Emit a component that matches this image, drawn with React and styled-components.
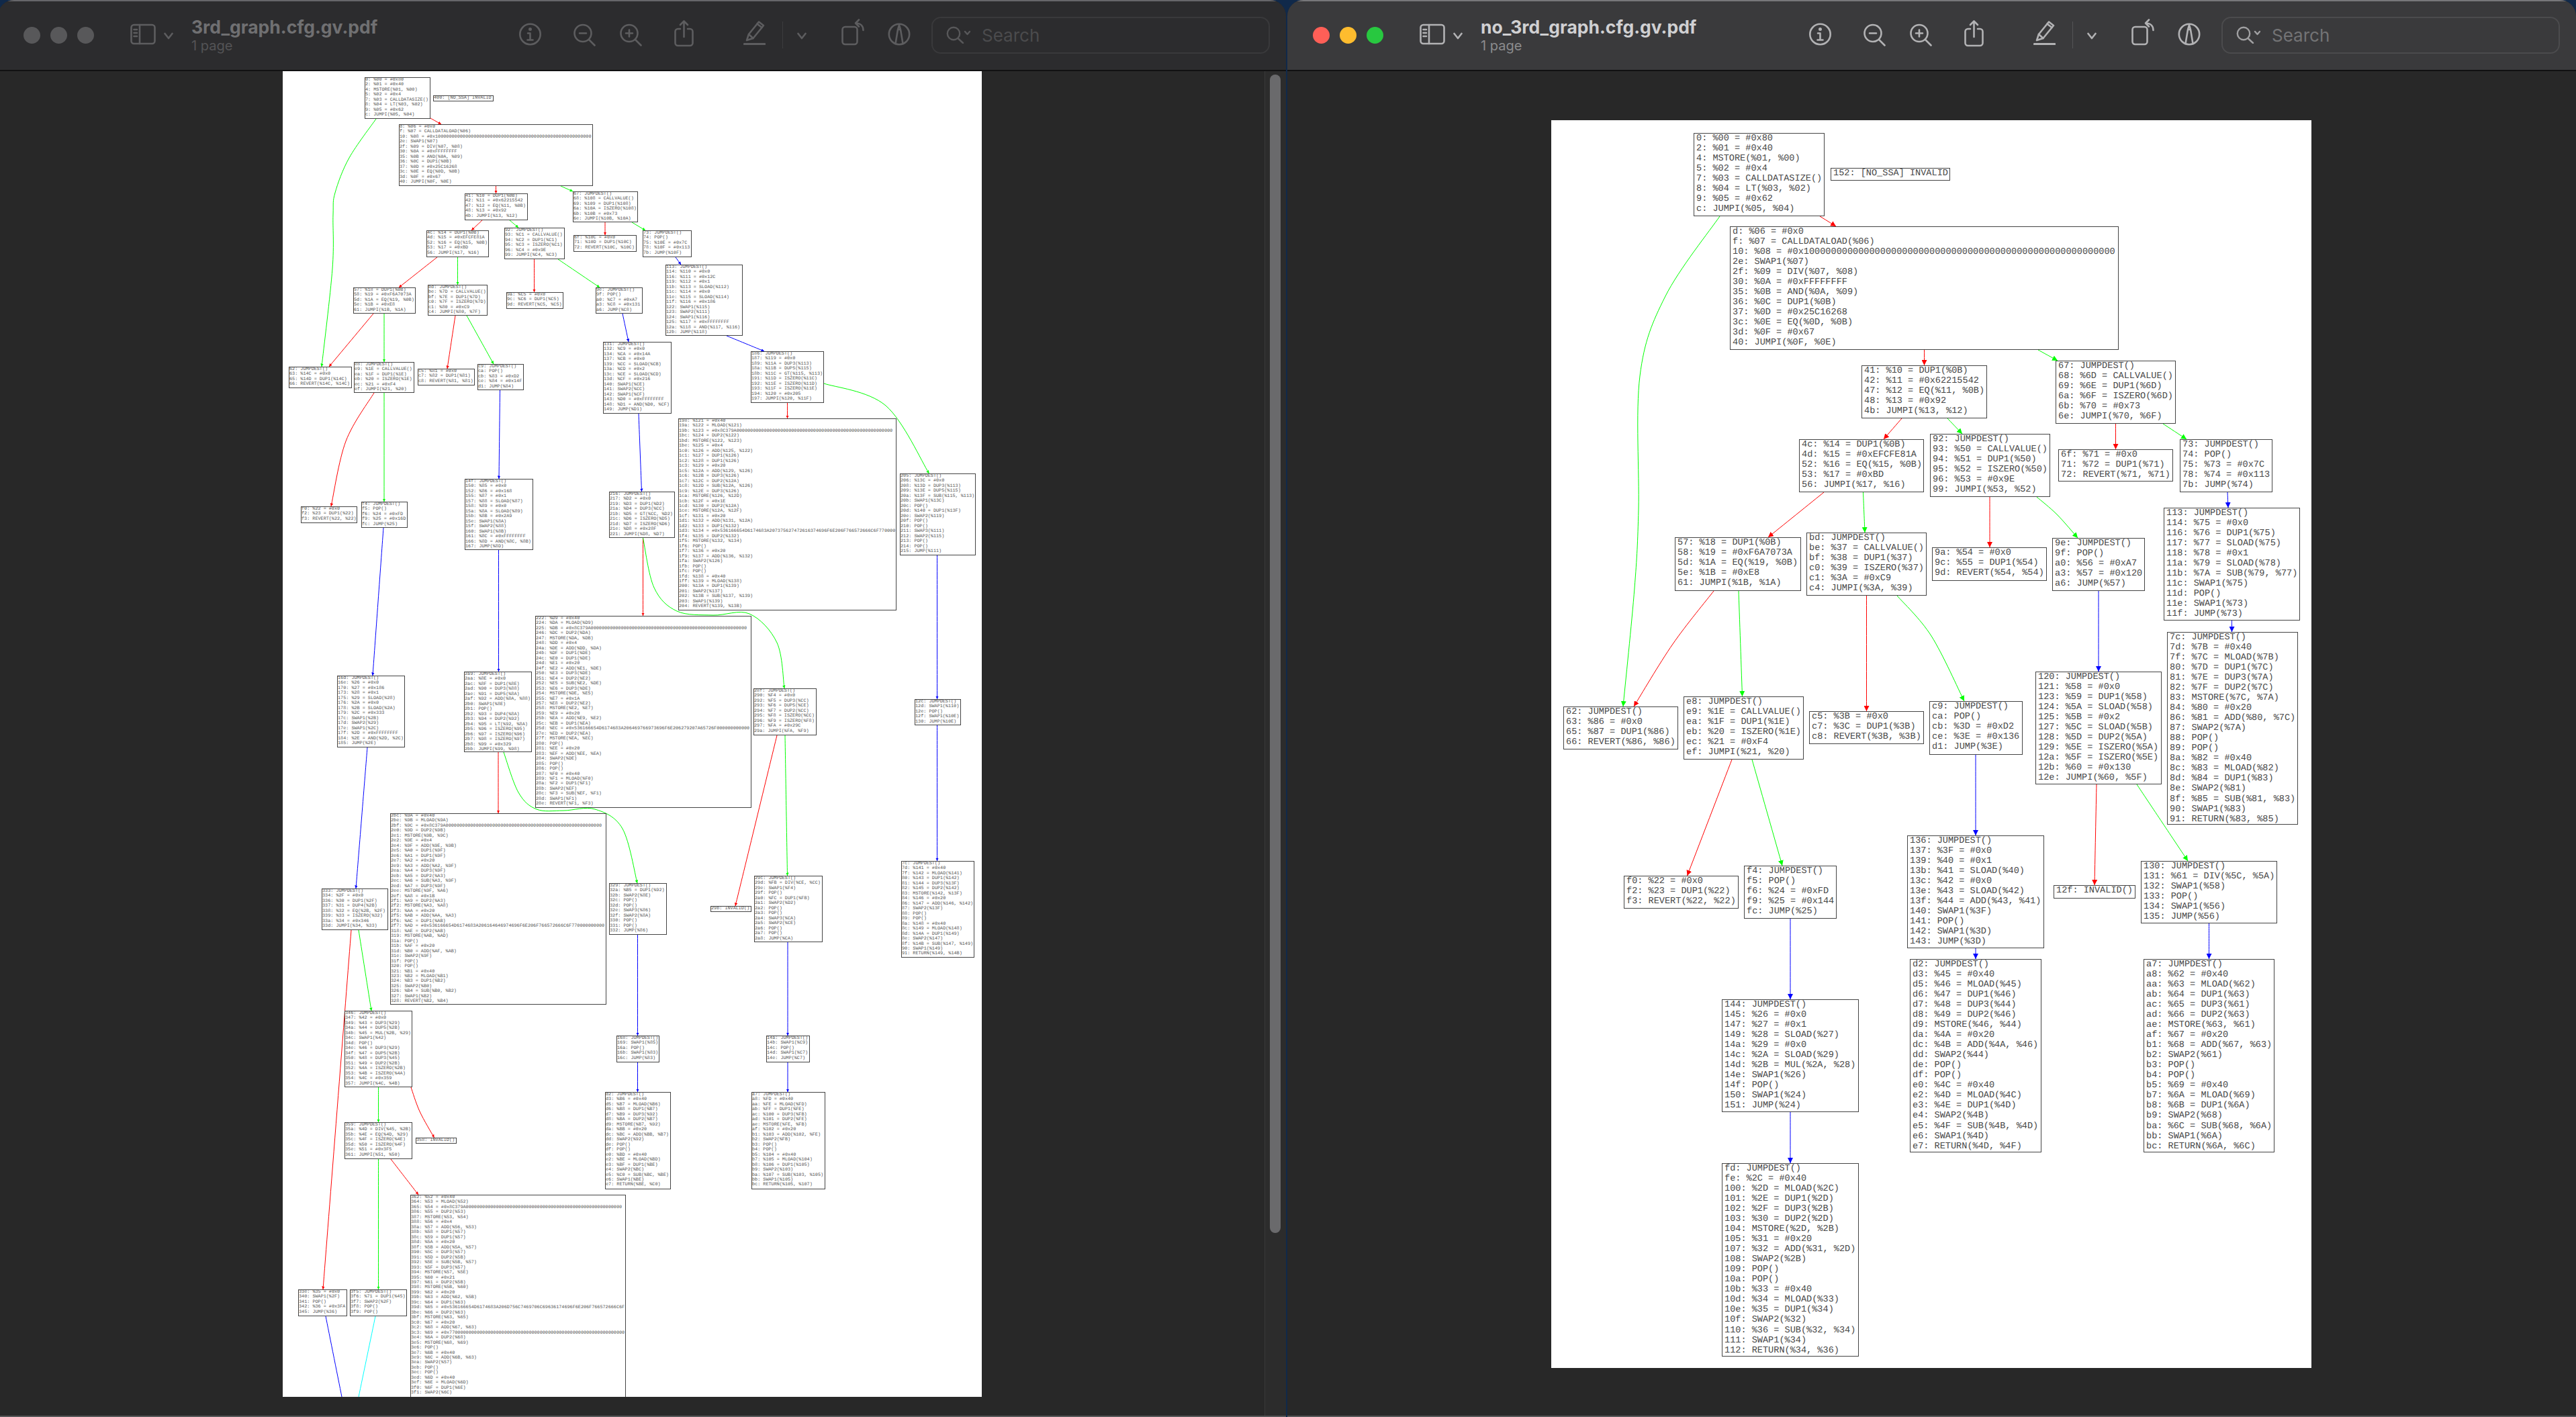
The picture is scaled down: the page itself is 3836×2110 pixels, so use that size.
import React from "react";
import styled, { createGlobalStyle } from "styled-components";

const zeros = (n) => "0".repeat(n);
const REASON = "#0x8C379A" + zeros(57);

const GlobalStyle = createGlobalStyle`
  html, body {
    margin: 0;
    padding: 0;
    background: #10294a;
  }
`;

// page rectangles and text metrics of the two pdf pages, in screen pixels
const LEFT_PAGE = { x: 421, y: 106, w: 1041, h: 1974, font: 6.8, line: 7.47, pad: 1, head: 4.5, ink: "#555" };
const RIGHT_PAGE = { x: 2310, y: 179, w: 1132, h: 1858, font: 13.57, line: 15.03, pad: 4, head: 8, ink: "#484848" };

const COLORS = { r: "#ff0000", g: "#00ff00", b: "#0000ff", c: "#00ffff" };

const RIGHT_NODES = [
  [2522, 198, 2717, 322, "0: %00 = #0x80\n2: %01 = #0x40\n4: MSTORE(%01, %00)\n5: %02 = #0x4\n7: %03 = CALLDATASIZE()\n8: %04 = LT(%03, %02)\n9: %05 = #0x62\nc: JUMPI(%05, %04)"],
  [2726, 250, 2904, 269, "152: [NO_SSA] INVALID"],
  [2576, 337, 3155, 521, "d: %06 = #0x0\nf: %07 = CALLDATALOAD(%06)\n10: %08 = #0x1" + zeros(56) + "\n2e: SWAP1(%07)\n2f: %09 = DIV(%07, %08)\n30: %0A = #0xFFFFFFFF\n35: %0B = AND(%0A, %09)\n36: %0C = DUP1(%0B)\n37: %0D = #0x25C16268\n3c: %0E = EQ(%0D, %0B)\n3d: %0F = #0x67\n40: JUMPI(%0F, %0E)"],
  [2772, 544, 2959, 623, "41: %10 = DUP1(%0B)\n42: %11 = #0x62215542\n47: %12 = EQ(%11, %0B)\n48: %13 = #0x92\n4b: JUMPI(%13, %12)"],
  [3061, 537, 3240, 631, "67: JUMPDEST()\n68: %6D = CALLVALUE()\n69: %6E = DUP1(%6D)\n6a: %6F = ISZERO(%6D)\n6b: %70 = #0x73\n6e: JUMPI(%70, %6F)"],
  [2679, 654, 2865, 733, "4c: %14 = DUP1(%0B)\n4d: %15 = #0xEFCFE81A\n52: %16 = EQ(%15, %0B)\n53: %17 = #0xBD\n56: JUMPI(%17, %16)"],
  [2874, 646, 3053, 740, "92: JUMPDEST()\n93: %50 = CALLVALUE()\n94: %51 = DUP1(%50)\n95: %52 = ISZERO(%50)\n96: %53 = #0x9E\n99: JUMPI(%53, %52)"],
  [3065, 669, 3236, 717, "6f: %71 = #0x0\n71: %72 = DUP1(%71)\n72: REVERT(%71, %71)"],
  [3246, 654, 3384, 733, "73: JUMPDEST()\n74: POP()\n75: %73 = #0x7C\n78: %74 = #0x113\n7b: JUMP(%74)"],
  [3222, 756, 3425, 924, "113: JUMPDEST()\n114: %75 = #0x0\n116: %76 = DUP1(%75)\n117: %77 = SLOAD(%75)\n118: %78 = #0x1\n11a: %79 = SLOAD(%78)\n11b: %7A = SUB(%79, %77)\n11c: SWAP1(%75)\n11d: POP()\n11e: SWAP1(%73)\n11f: JUMP(%73)"],
  [2494, 800, 2682, 880, "57: %18 = DUP1(%0B)\n58: %19 = #0xF6A7073A\n5d: %1A = EQ(%19, %0B)\n5e: %1B = #0xE8\n61: JUMPI(%1B, %1A)"],
  [2690, 793, 2869, 887, "bd: JUMPDEST()\nbe: %37 = CALLVALUE()\nbf: %38 = DUP1(%37)\nc0: %39 = ISZERO(%37)\nc1: %3A = #0xC9\nc4: JUMPI(%3A, %39)"],
  [2877, 815, 3048, 865, "9a: %54 = #0x0\n9c: %55 = DUP1(%54)\n9d: REVERT(%54, %54)"],
  [3056, 801, 3194, 880, "9e: JUMPDEST()\n9f: POP()\na0: %56 = #0xA7\na3: %57 = #0x120\na6: JUMP(%57)"],
  [2328, 1052, 2499, 1116, "62: JUMPDEST()\n63: %86 = #0x0\n65: %87 = DUP1(%86)\n66: REVERT(%86, %86)"],
  [2507, 1037, 2686, 1131, "e8: JUMPDEST()\ne9: %1E = CALLVALUE()\nea: %1F = DUP1(%1E)\neb: %20 = ISZERO(%1E)\nec: %21 = #0xF4\nef: JUMPI(%21, %20)"],
  [2694, 1059, 2865, 1108, "c5: %3B = #0x0\nc7: %3C = DUP1(%3B)\nc8: REVERT(%3B, %3B)"],
  [2873, 1044, 3012, 1124, "c9: JUMPDEST()\nca: POP()\ncb: %3D = #0xD2\nce: %3E = #0x136\nd1: JUMP(%3E)"],
  [3031, 1000, 3219, 1168, "120: JUMPDEST()\n121: %58 = #0x0\n123: %59 = DUP1(%58)\n124: %5A = SLOAD(%58)\n125: %5B = #0x2\n127: %5C = SLOAD(%5B)\n128: %5D = DUP2(%5A)\n129: %5E = ISZERO(%5A)\n12a: %5F = ISZERO(%5E)\n12b: %60 = #0x130\n12e: JUMPI(%60, %5F)"],
  [3227, 941, 3422, 1228, "7c: JUMPDEST()\n7d: %7B = #0x40\n7f: %7C = MLOAD(%7B)\n80: %7D = DUP1(%7C)\n81: %7E = DUP3(%7A)\n82: %7F = DUP2(%7C)\n83: MSTORE(%7C, %7A)\n84: %80 = #0x20\n86: %81 = ADD(%80, %7C)\n87: SWAP2(%7A)\n88: POP()\n89: POP()\n8a: %82 = #0x40\n8c: %83 = MLOAD(%82)\n8d: %84 = DUP1(%83)\n8e: SWAP2(%81)\n8f: %85 = SUB(%81, %83)\n90: SWAP1(%83)\n91: RETURN(%83, %85)"],
  [3188, 1282, 3391, 1375, "130: JUMPDEST()\n131: %61 = DIV(%5C, %5A)\n132: SWAP1(%58)\n133: POP()\n134: SWAP1(%56)\n135: JUMP(%56)"],
  [3058, 1318, 3180, 1338, "12f: INVALID()"],
  [3192, 1428, 3387, 1716, "a7: JUMPDEST()\na8: %62 = #0x40\naa: %63 = MLOAD(%62)\nab: %64 = DUP1(%63)\nac: %65 = DUP3(%61)\nad: %66 = DUP2(%63)\nae: MSTORE(%63, %61)\naf: %67 = #0x20\nb1: %68 = ADD(%67, %63)\nb2: SWAP2(%61)\nb3: POP()\nb4: POP()\nb5: %69 = #0x40\nb7: %6A = MLOAD(%69)\nb8: %6B = DUP1(%6A)\nb9: SWAP2(%68)\nba: %6C = SUB(%68, %6A)\nbb: SWAP1(%6A)\nbc: RETURN(%6A, %6C)"],
  [2840, 1244, 3044, 1412, "136: JUMPDEST()\n137: %3F = #0x0\n139: %40 = #0x1\n13b: %41 = SLOAD(%40)\n13c: %42 = #0x0\n13e: %43 = SLOAD(%42)\n13f: %44 = ADD(%43, %41)\n140: SWAP1(%3F)\n141: POP()\n142: SWAP1(%3D)\n143: JUMP(%3D)"],
  [2844, 1428, 3040, 1716, "d2: JUMPDEST()\nd3: %45 = #0x40\nd5: %46 = MLOAD(%45)\nd6: %47 = DUP1(%46)\nd7: %48 = DUP3(%44)\nd8: %49 = DUP2(%46)\nd9: MSTORE(%46, %44)\nda: %4A = #0x20\ndc: %4B = ADD(%4A, %46)\ndd: SWAP2(%44)\nde: POP()\ndf: POP()\ne0: %4C = #0x40\ne2: %4D = MLOAD(%4C)\ne3: %4E = DUP1(%4D)\ne4: SWAP2(%4B)\ne5: %4F = SUB(%4B, %4D)\ne6: SWAP1(%4D)\ne7: RETURN(%4D, %4F)"],
  [2597, 1289, 2735, 1368, "f4: JUMPDEST()\nf5: POP()\nf6: %24 = #0xFD\nf9: %25 = #0x144\nfc: JUMP(%25)"],
  [2418, 1304, 2589, 1353, "f0: %22 = #0x0\nf2: %23 = DUP1(%22)\nf3: REVERT(%22, %22)"],
  [2564, 1488, 2768, 1656, "144: JUMPDEST()\n145: %26 = #0x0\n147: %27 = #0x1\n149: %28 = SLOAD(%27)\n14a: %29 = #0x0\n14c: %2A = SLOAD(%29)\n14d: %2B = MUL(%2A, %28)\n14e: SWAP1(%26)\n14f: POP()\n150: SWAP1(%24)\n151: JUMP(%24)"],
  [2564, 1732, 2768, 2020, "fd: JUMPDEST()\nfe: %2C = #0x40\n100: %2D = MLOAD(%2C)\n101: %2E = DUP1(%2D)\n102: %2F = DUP3(%2B)\n103: %30 = DUP2(%2D)\n104: MSTORE(%2D, %2B)\n105: %31 = #0x20\n107: %32 = ADD(%31, %2D)\n108: SWAP2(%2B)\n109: POP()\n10a: POP()\n10b: %33 = #0x40\n10d: %34 = MLOAD(%33)\n10e: %35 = DUP1(%34)\n10f: SWAP2(%32)\n110: %36 = SUB(%32, %34)\n111: SWAP1(%34)\n112: RETURN(%34, %36)"],
];

const RIGHT_EDGES = [
  ["g", [[2561, 322], [2480, 441], [2442, 560], [2440, 758], [2434, 876], [2417, 1052]]],
  ["r", [[2710, 322], [2734, 337]]],
  ["r", [[2865.5, 521], [2865.5, 544]]],
  ["g", [[3035, 521], [3064, 537]]],
  ["r", [[2832, 623], [2805, 654]]],
  ["g", [[2900, 623], [2922, 646]]],
  ["r", [[3150.5, 631], [3150.5, 669]]],
  ["g", [[3221, 631], [3256, 654]]],
  ["r", [[2716, 733], [2633, 800]]],
  ["g", [[2774.5, 733], [2777, 793]]],
  ["r", [[2963, 740], [2963, 815]]],
  ["g", [[3033, 740], [3063, 766], [3094, 801]]],
  ["r", [[2552, 880], [2491, 959], [2433, 1052]]],
  ["g", [[2589, 880], [2594.5, 1037]]],
  ["r", [[2779.5, 887], [2779.5, 1059]]],
  ["g", [[2825, 887], [2876, 947], [2925, 1044]]],
  ["b", [[2942, 1124], [2942, 1244]]],
  ["r", [[2579, 1131], [2512.5, 1304]]],
  ["g", [[2609, 1131], [2654, 1289]]],
  ["b", [[2666, 1368], [2666, 1488]]],
  ["b", [[2942, 1412], [2942, 1428]]],
  ["b", [[2666, 1656], [2666, 1732]]],
  ["b", [[3317, 733], [3318, 756]]],
  ["b", [[3323.5, 924], [3323.5, 941]]],
  ["b", [[3125, 880], [3125, 1000]]],
  ["r", [[3122, 1168], [3119, 1318]]],
  ["g", [[3182, 1168], [3220, 1225], [3258, 1282]]],
  ["b", [[3289.5, 1375], [3289.5, 1428]]],
];

const LEFT_NODES = [
  [543, 115, 641, 177, "0: %00 = #0x80\n2: %01 = #0x40\n4: MSTORE(%01, %00)\n5: %02 = #0x4\n7: %03 = CALLDATASIZE()\n8: %04 = LT(%03, %02)\n9: %05 = #0x62\nc: JUMPI(%05, %04)"],
  [645, 142, 735, 151, "400: [NO_SSA] INVALID"],
  [594, 185, 883, 277, "d: %06 = #0x0\nf: %07 = CALLDATALOAD(%06)\n10: %08 = #0x1" + zeros(56) + "\n2e: SWAP1(%07)\n2f: %09 = DIV(%07, %08)\n30: %0A = #0xFFFFFFFF\n35: %0B = AND(%0A, %09)\n36: %0C = DUP1(%0B)\n37: %0D = #0x25C16268\n3c: %0E = EQ(%0D, %0B)\n3d: %0F = #0x67\n40: JUMPI(%0F, %0E)"],
  [692, 288, 786, 328, "41: %10 = DUP1(%0B)\n42: %11 = #0x62215542\n47: %12 = EQ(%11, %0B)\n48: %13 = #0x92\n4b: JUMPI(%13, %12)"],
  [853, 285, 950, 331, "67: JUMPDEST()\n68: %108 = CALLVALUE()\n69: %109 = DUP1(%108)\n6a: %10A = ISZERO(%108)\n6b: %10B = #0x73\n6e: JUMPI(%10B, %10A)"],
  [635, 343, 728, 383, "4c: %14 = DUP1(%0B)\n4d: %15 = #0xEFCFE81A\n52: %16 = EQ(%15, %0B)\n53: %17 = #0xBD\n56: JUMPI(%17, %16)"],
  [751, 339, 841, 386, "92: JUMPDEST()\n93: %C1 = CALLVALUE()\n94: %C2 = DUP1(%C1)\n95: %C3 = ISZERO(%C1)\n96: %C4 = #0x9E\n99: JUMPI(%C4, %C3)"],
  [854, 350, 948, 375, "6f: %10C = #0x0\n71: %10D = DUP1(%10C)\n72: REVERT(%10C, %10C)"],
  [957, 343, 1030, 383, "73: JUMPDEST()\n74: POP()\n75: %10E = #0x7C\n78: %10F = #0x113\n7b: JUMP(%10F)"],
  [991, 394, 1106, 500, "113: JUMPDEST()\n114: %110 = #0x0\n116: %111 = #0x12C\n119: %112 = #0x1\n11b: %113 = SLOAD(%112)\n11c: %114 = #0x0\n11e: %115 = SLOAD(%114)\n11f: %116 = #0x186\n122: SWAP1(%115)\n123: SWAP2(%111)\n124: SWAP1(%116)\n125: %117 = #0xFFFFFFFF\n12a: %118 = AND(%117, %116)\n12b: JUMP(%118)"],
  [526, 428, 619, 467, "57: %18 = DUP1(%0B)\n58: %19 = #0xF6A7073A\n5d: %1A = EQ(%19, %0B)\n5e: %1B = #0xE8\n61: JUMPI(%1B, %1A)"],
  [637, 424, 726, 470, "bd: JUMPDEST()\nbe: %7D = CALLVALUE()\nbf: %7E = DUP1(%7D)\nc0: %7F = ISZERO(%7D)\nc1: %80 = #0xC9\nc4: JUMPI(%80, %7F)"],
  [754, 435, 839, 460, "9a: %C5 = #0x0\n9c: %C6 = DUP1(%C5)\n9d: REVERT(%C5, %C5)"],
  [887, 428, 957, 467, "9e: JUMPDEST()\n9f: POP()\na0: %C7 = #0xA7\na3: %C8 = #0x131\na6: JUMP(%C8)"],
  [898, 509, 1000, 616, "131: JUMPDEST()\n132: %C9 = #0x0\n134: %CA = #0x14A\n137: %CB = #0x0\n139: %CC = SLOAD(%CB)\n13a: %CD = #0x2\n13c: %CE = SLOAD(%CD)\n13d: %CF = #0x216\n140: SWAP1(%CE)\n141: SWAP2(%CC)\n142: SWAP1(%CF)\n143: %D0 = #0xFFFFFFFF\n148: %D1 = AND(%D0, %CF)\n149: JUMP(%D1)"],
  [1118, 523, 1227, 600, "186: JUMPDEST()\n187: %119 = #0x0\n189: %11A = DUP3(%113)\n18a: %11B = DUP5(%115)\n18b: %11C = GT(%115, %113)\n191: %11D = ISZERO(%11C)\n192: %11E = ISZERO(%11D)\n193: %11F = ISZERO(%11E)\n194: %120 = #0x205\n197: JUMPI(%120, %11F)"],
  [430, 546, 524, 578, "62: JUMPDEST()\n63: %14C = #0x0\n65: %14D = DUP1(%14C)\n66: REVERT(%14C, %14C)"],
  [527, 539, 617, 585, "e8: JUMPDEST()\ne9: %1E = CALLVALUE()\nea: %1F = DUP1(%1E)\neb: %20 = ISZERO(%1E)\nec: %21 = #0xF4\nef: JUMPI(%21, %20)"],
  [622, 549, 707, 574, "c5: %81 = #0x0\nc7: %82 = DUP1(%81)\nc8: REVERT(%81, %81)"],
  [711, 542, 780, 581, "c9: JUMPDEST()\nca: POP()\ncb: %83 = #0xD2\nce: %84 = #0x14F\nd1: JUMP(%84)"],
  [1010, 623, 1335, 909, "198: %121 = #0x40\n19a: %122 = MLOAD(%121)\n19b: %123 = " + REASON + "\n1bc: %124 = DUP2(%122)\n1bd: MSTORE(%122, %123)\n1be: %125 = #0x4\n1c0: %126 = ADD(%125, %122)\n1c1: %127 = DUP1(%126)\n1c2: %128 = DUP1(%126)\n1c3: %129 = #0x20\n1c5: %12A = ADD(%129, %126)\n1c6: %12B = DUP3(%126)\n1c7: %12C = DUP2(%12A)\n1c8: %12D = SUB(%12A, %126)\n1c9: %12E = DUP3(%126)\n1ca: MSTORE(%126, %12D)\n1cb: %12F = #0x1E\n1cd: %130 = DUP2(%12A)\n1ce: MSTORE(%12A, %12F)\n1cf: %131 = #0x20\n1d1: %132 = ADD(%131, %12A)\n1d2: %133 = DUP1(%132)\n1d3: %134 = #0x536166654D6174683A207375627472616374696F6E206F766572666C6F770000\n1f4: %135 = DUP2(%132)\n1f5: MSTORE(%132, %134)\n1f6: POP()\n1f7: %136 = #0x20\n1f9: %137 = ADD(%136, %132)\n1fa: SWAP2(%126)\n1fb: POP()\n1fc: POP()\n1fd: %138 = #0x40\n1ff: %139 = MLOAD(%138)\n200: %13A = DUP1(%139)\n201: SWAP2(%137)\n202: %13B = SUB(%137, %139)\n203: SWAP1(%139)\n204: REVERT(%139, %13B)"],
  [797, 917, 1119, 1203, "222: %D9 = #0x40\n224: %DA = MLOAD(%D9)\n225: %DB = " + REASON + "\n246: %DC = DUP2(%DA)\n247: MSTORE(%DA, %DB)\n248: %DD = #0x4\n24a: %DE = ADD(%DD, %DA)\n24b: %DF = DUP1(%DE)\n24c: %E0 = DUP1(%DE)\n24d: %E1 = #0x20\n24f: %E2 = ADD(%E1, %DE)\n250: %E3 = DUP3(%DE)\n251: %E4 = DUP2(%E2)\n252: %E5 = SUB(%E2, %DE)\n253: %E6 = DUP3(%DE)\n254: MSTORE(%DE, %E5)\n255: %E7 = #0x1A\n257: %E8 = DUP2(%E2)\n258: MSTORE(%E2, %E7)\n259: %E9 = #0x20\n25b: %EA = ADD(%E9, %E2)\n25c: %EB = DUP1(%EA)\n25d: %EC = #0x536166654D6174683A206469766973696F6E206279207A65726F000000000000\n27e: %ED = DUP2(%EA)\n27f: MSTORE(%EA, %EC)\n280: POP()\n281: %EE = #0x20\n283: %EF = ADD(%EE, %EA)\n284: SWAP2(%DE)\n285: POP()\n286: POP()\n287: %F0 = #0x40\n289: %F1 = MLOAD(%F0)\n28a: %F2 = DUP1(%F1)\n28b: SWAP2(%EF)\n28c: %F3 = SUB(%EF, %F1)\n28d: SWAP1(%F1)\n28e: REVERT(%F1, %F3)"],
  [907, 732, 1005, 801, "216: JUMPDEST()\n217: %D2 = #0x0\n219: %D3 = DUP1(%D2)\n21a: %D4 = DUP3(%CC)\n21b: %D5 = GT(%CC, %D2)\n21c: %D6 = ISZERO(%D5)\n21d: %D7 = ISZERO(%D6)\n21e: %D8 = #0x28F\n221: JUMPI(%D8, %D7)"],
  [692, 713, 794, 819, "14f: JUMPDEST()\n150: %85 = #0x0\n152: %86 = #0x168\n155: %87 = #0x1\n157: %88 = SLOAD(%87)\n158: %89 = #0x0\n15a: %8A = SLOAD(%89)\n15b: %8B = #0x2A9\n15e: SWAP1(%8A)\n15f: SWAP2(%88)\n160: SWAP1(%8B)\n161: %8C = #0xFFFFFFFF\n166: %8D = AND(%8C, %8B)\n167: JUMP(%8D)"],
  [448, 754, 532, 779, "f0: %22 = #0x0\nf2: %23 = DUP1(%22)\nf3: REVERT(%22, %22)"],
  [538, 747, 607, 786, "f4: JUMPDEST()\nf5: POP()\nf6: %24 = #0xFD\nf9: %25 = #0x16D\nfc: JUMP(%25)"],
  [1340, 705, 1453, 827, "205: JUMPDEST()\n206: %13C = #0x0\n208: %13D = DUP3(%113)\n209: %13E = DUP5(%115)\n20a: %13F = SUB(%115, %113)\n20b: SWAP1(%13C)\n20c: POP()\n20d: %140 = DUP1(%13F)\n20e: SWAP2(%119)\n20f: POP()\n210: POP()\n211: SWAP3(%111)\n212: SWAP2(%115)\n213: POP()\n214: POP()\n215: JUMP(%111)"],
  [502, 1006, 603, 1113, "16d: JUMPDEST()\n16e: %26 = #0x0\n170: %27 = #0x186\n173: %28 = #0x1\n175: %29 = SLOAD(%28)\n176: %2A = #0x0\n178: %2B = SLOAD(%2A)\n179: %2C = #0x333\n17c: SWAP1(%2B)\n17d: SWAP2(%29)\n17e: SWAP1(%2C)\n17f: %2D = #0xFFFFFFFF\n184: %2E = AND(%2D, %2C)\n185: JUMP(%2E)"],
  [691, 1000, 792, 1120, "2a9: JUMPDEST()\n2aa: %8E = #0x0\n2ac: %8F = DUP1(%8E)\n2ad: %90 = DUP3(%88)\n2ae: %91 = DUP5(%8A)\n2af: %92 = ADD(%8A, %88)\n2b0: SWAP1(%8E)\n2b1: POP()\n2b2: %93 = DUP4(%8A)\n2b3: %94 = DUP2(%92)\n2b4: %95 = LT(%92, %8A)\n2b5: %96 = ISZERO(%95)\n2b6: %97 = ISZERO(%96)\n2b7: %98 = ISZERO(%97)\n2b8: %99 = #0x329\n2bb: JUMPI(%99, %98)"],
  [1122, 1025, 1216, 1095, "28f: JUMPDEST()\n290: %F4 = #0x0\n292: %F5 = DUP3(%CC)\n293: %F6 = DUP5(%CE)\n294: %F7 = DUP2(%CC)\n295: %F8 = ISZERO(%CC)\n296: %F9 = ISZERO(%F8)\n297: %FA = #0x29C\n29a: JUMPI(%FA, %F9)"],
  [1362, 1041, 1431, 1080, "12c: JUMPDEST()\n12d: SWAP1(%110)\n12e: POP()\n12f: SWAP1(%10E)\n130: JUMP(%10E)"],
  [581, 1211, 903, 1496, "2bc: %9A = #0x40\n2be: %9B = MLOAD(%9A)\n2bf: %9C = " + REASON + "\n2e0: %9D = DUP2(%9B)\n2e1: MSTORE(%9B, %9C)\n2e2: %9E = #0x4\n2e4: %9F = ADD(%9E, %9B)\n2e5: %A0 = DUP1(%9F)\n2e6: %A1 = DUP1(%9F)\n2e7: %A2 = #0x20\n2e9: %A3 = ADD(%A2, %9F)\n2ea: %A4 = DUP3(%9F)\n2eb: %A5 = DUP2(%A3)\n2ec: %A6 = SUB(%A3, %9F)\n2ed: %A7 = DUP3(%9F)\n2ee: MSTORE(%9F, %A6)\n2ef: %A8 = #0x1B\n2f1: %A9 = DUP2(%A3)\n2f2: MSTORE(%A3, %A8)\n2f3: %AA = #0x20\n2f5: %AB = ADD(%AA, %A3)\n2f6: %AC = DUP1(%AB)\n2f7: %AD = #0x536166654D6174683A206164646974696F6E206F766572666C6F770000000000\n318: %AE = DUP2(%AB)\n319: MSTORE(%AB, %AD)\n31a: POP()\n31b: %AF = #0x20\n31d: %B0 = ADD(%AF, %AB)\n31e: SWAP2(%9F)\n31f: POP()\n320: POP()\n321: %B1 = #0x40\n323: %B2 = MLOAD(%B1)\n324: %B3 = DUP1(%B2)\n325: SWAP2(%B0)\n326: %B4 = SUB(%B0, %B2)\n327: SWAP1(%B2)\n328: REVERT(%B2, %B4)"],
  [1342, 1282, 1451, 1426, "7c: JUMPDEST()\n7d: %141 = #0x40\n7f: %142 = MLOAD(%141)\n80: %143 = DUP1(%142)\n81: %144 = DUP3(%13F)\n82: %145 = DUP2(%142)\n83: MSTORE(%142, %13F)\n84: %146 = #0x20\n86: %147 = ADD(%146, %142)\n87: SWAP2(%13F)\n88: POP()\n89: POP()\n8a: %148 = #0x40\n8c: %149 = MLOAD(%148)\n8d: %14A = DUP1(%149)\n8e: SWAP2(%147)\n8f: %14B = SUB(%147, %149)\n90: SWAP1(%149)\n91: RETURN(%149, %14B)"],
  [1123, 1304, 1225, 1403, "29c: JUMPDEST()\n29d: %FB = DIV(%CE, %CC)\n29e: SWAP1(%F4)\n29f: POP()\n2a0: %FC = DUP1(%FB)\n2a1: SWAP2(%D2)\n2a2: POP()\n2a3: POP()\n2a4: SWAP3(%CA)\n2a5: SWAP2(%CE)\n2a6: POP()\n2a7: POP()\n2a8: JUMP(%CA)"],
  [479, 1323, 578, 1385, "333: JUMPDEST()\n334: %2F = #0x0\n336: %30 = DUP1(%2F)\n337: %31 = DUP4(%2B)\n338: %32 = EQ(%2B, %2F)\n339: %33 = ISZERO(%32)\n33a: %34 = #0x346\n33d: JUMPI(%34, %33)"],
  [907, 1315, 993, 1392, "329: JUMPDEST()\n32a: %B5 = DUP1(%92)\n32b: SWAP2(%8E)\n32c: POP()\n32d: POP()\n32e: SWAP3(%86)\n32f: SWAP2(%8A)\n330: POP()\n331: POP()\n332: JUMP(%86)"],
  [1058, 1349, 1119, 1358, "29b: INVALID()"],
  [513, 1505, 614, 1619, "346: JUMPDEST()\n347: %42 = #0x0\n349: %43 = DUP3(%29)\n34a: %44 = DUP5(%2B)\n34b: %45 = MUL(%2B, %29)\n34c: SWAP1(%42)\n34d: POP()\n34e: %46 = DUP3(%29)\n34f: %47 = DUP5(%2B)\n350: %48 = DUP3(%45)\n351: %49 = DUP2(%2B)\n352: %4A = ISZERO(%2B)\n353: %4B = ISZERO(%4A)\n354: %4C = #0x359\n357: JUMPI(%4C, %4B)"],
  [918, 1542, 982, 1582, "168: JUMPDEST()\n169: SWAP1(%85)\n16a: POP()\n16b: SWAP1(%83)\n16c: JUMP(%83)"],
  [1141, 1542, 1206, 1582, "14a: JUMPDEST()\n14b: SWAP1(%C9)\n14c: POP()\n14d: SWAP1(%C7)\n14e: JUMP(%C7)"],
  [901, 1626, 999, 1771, "d2: JUMPDEST()\nd3: %B6 = #0x40\nd5: %B7 = MLOAD(%B6)\nd6: %B8 = DUP1(%B7)\nd7: %B9 = DUP3(%92)\nd8: %BA = DUP2(%B7)\nd9: MSTORE(%B7, %92)\nda: %BB = #0x20\ndc: %BC = ADD(%BB, %B7)\ndd: SWAP2(%92)\nde: POP()\ndf: POP()\ne0: %BD = #0x40\ne2: %BE = MLOAD(%BD)\ne3: %BF = DUP1(%BE)\ne4: SWAP2(%BC)\ne5: %C0 = SUB(%BC, %BE)\ne6: SWAP1(%BE)\ne7: RETURN(%BE, %C0)"],
  [1119, 1626, 1229, 1771, "a7: JUMPDEST()\na8: %FD = #0x40\naa: %FE = MLOAD(%FD)\nab: %FF = DUP1(%FE)\nac: %100 = DUP3(%FB)\nad: %101 = DUP2(%FE)\nae: MSTORE(%FE, %FB)\naf: %102 = #0x20\nb1: %103 = ADD(%102, %FE)\nb2: SWAP2(%FB)\nb3: POP()\nb4: POP()\nb5: %104 = #0x40\nb7: %105 = MLOAD(%104)\nb8: %106 = DUP1(%105)\nb9: SWAP2(%103)\nba: %107 = SUB(%103, %105)\nbb: SWAP1(%105)\nbc: RETURN(%105, %107)"],
  [513, 1671, 614, 1726, "359: JUMPDEST()\n35a: %4D = DIV(%45, %2B)\n35b: %4E = EQ(%4D, %29)\n35c: %4F = ISZERO(%4E)\n35d: %50 = ISZERO(%4F)\n35e: %51 = #0x3F5\n361: JUMPI(%51, %50)"],
  [619, 1694, 680, 1703, "358: INVALID()"],
  [611, 1779, 932, 2110, "362: %52 = #0x40\n364: %53 = MLOAD(%52)\n365: %54 = " + REASON + "\n386: %55 = DUP2(%53)\n387: MSTORE(%53, %54)\n388: %56 = #0x4\n38a: %57 = ADD(%56, %53)\n38b: %58 = DUP1(%57)\n38c: %59 = DUP1(%57)\n38d: %5A = #0x20\n38f: %5B = ADD(%5A, %57)\n390: %5C = DUP3(%57)\n391: %5D = DUP2(%5B)\n392: %5E = SUB(%5B, %57)\n393: %5F = DUP3(%57)\n394: MSTORE(%57, %5E)\n395: %60 = #0x21\n397: %61 = DUP2(%5B)\n398: MSTORE(%5B, %60)\n399: %62 = #0x20\n39b: %63 = ADD(%62, %5B)\n39c: %64 = DUP1(%63)\n39d: %65 = #0x536166654D6174683A206D756C7469706C69636174696F6E206F766572666C6F\n3be: %66 = DUP2(%63)\n3bf: MSTORE(%63, %65)\n3c0: %67 = #0x20\n3c2: %68 = ADD(%67, %63)\n3c3: %69 = #0x77" + zeros(62) + "\n3e4: %6A = DUP2(%68)\n3e5: MSTORE(%68, %69)\n3e6: POP()\n3e7: %6B = #0x40\n3e9: %6C = ADD(%6B, %63)\n3ea: SWAP2(%57)\n3eb: POP()\n3ec: POP()\n3ed: %6D = #0x40\n3ef: %6E = MLOAD(%6D)\n3f0: %6F = DUP1(%6E)\n3f1: SWAP2(%6C)"],
  [444, 1920, 517, 1960, "33e: %35 = #0x0\n340: SWAP1(%2F)\n341: POP()\n342: %36 = #0x3FA\n345: JUMP(%36)"],
  [521, 1920, 606, 1960, "3f5: JUMPDEST()\n3f6: %71 = DUP1(%45)\n3f7: SWAP2(%2F)\n3f8: POP()\n3f9: POP()"],
];

const LEFT_EDGES = [
  ["g", [[560, 177], [520, 235], [499, 287], [496, 320], [495, 400], [479, 546]]],
  ["r", [[641, 176], [657, 185]]],
  ["r", [[738.5, 277], [738.5, 288]]],
  ["g", [[835, 277], [853, 285]]],
  ["r", [[718, 328], [702, 343]]],
  ["g", [[759, 328], [772, 339]]],
  ["r", [[901, 331], [901, 350]]],
  ["g", [[941, 331], [961, 343]]],
  ["b", [[1006, 383], [1014, 394]]],
  ["b", [[1082, 500], [1138, 523]]],
  ["r", [[651, 383], [594, 428]]],
  ["g", [[681.5, 383], [681.5, 424]]],
  ["r", [[795.5, 386], [795.5, 435]]],
  ["g", [[831, 386], [893, 428]]],
  ["b", [[927, 467], [936, 509]]],
  ["r", [[556, 467], [490, 546]]],
  ["g", [[572, 467], [572, 539]]],
  ["r", [[678, 470], [666, 549]]],
  ["g", [[695, 470], [735, 542]]],
  ["r", [[557, 585], [515, 657], [493, 754]]],
  ["g", [[572, 585], [572, 747]]],
  ["b", [[744.5, 581], [743, 713]]],
  ["b", [[951, 616], [955.5, 732]]],
  ["r", [[1172.5, 600], [1172.5, 623]]],
  ["g", [[1227, 571], [1319, 604], [1383.5, 705]]],
  ["b", [[571, 786], [555, 1006]]],
  ["b", [[742.5, 819], [742.5, 1000]]],
  ["r", [[957.5, 801], [957.5, 917]]],
  ["g", [[957.5, 801], [974, 875], [1008, 910], [1062, 916], [1116, 914], [1157, 957], [1168, 1025]]],
  ["b", [[1395.5, 827], [1395.5, 1041]]],
  ["b", [[1395.5, 1080], [1395.5, 1282]]],
  ["b", [[547, 1113], [530, 1323]]],
  ["r", [[742, 1120], [742, 1211]]],
  ["g", [[750, 1120], [772, 1180], [799, 1205], [839, 1207], [886, 1205], [927, 1234], [949, 1315]]],
  ["r", [[1157, 1095], [1095, 1349]]],
  ["g", [[1169, 1095], [1172.5, 1304]]],
  ["r", [[523, 1385], [481, 1920]]],
  ["g", [[534, 1385], [553, 1505]]],
  ["g", [[563.5, 1619], [563.5, 1671]]],
  ["r", [[612, 1619], [625, 1655], [646.5, 1694]]],
  ["g", [[563.5, 1726], [563.5, 1920]]],
  ["r", [[582, 1726], [623, 1779]]],
  ["b", [[949.5, 1392], [949.5, 1542]]],
  ["b", [[1173, 1403], [1173, 1542]]],
  ["b", [[949.5, 1582], [949.5, 1626]]],
  ["b", [[1173, 1582], [1173, 1626]]],
  ["b", [[485, 1960], [510, 2085]]],
  ["c", [[559, 1960], [533, 2085]]],
];

// catmull-rom through the points, so a bent edge reads like graphviz splines
const edgePath = (pts) => {
  let d = `M${pts[0][0]} ${pts[0][1]}`;
  for (let i = 0; i < pts.length - 1; i++) {
    const p0 = pts[i - 1] || pts[i];
    const p1 = pts[i];
    const p2 = pts[i + 1];
    const p3 = pts[i + 2] || p2;
    const c1 = [p1[0] + (p2[0] - p0[0]) / 6, p1[1] + (p2[1] - p0[1]) / 6];
    const c2 = [p2[0] - (p3[0] - p1[0]) / 6, p2[1] - (p3[1] - p1[1]) / 6];
    d += ` C${c1[0]} ${c1[1]} ${c2[0]} ${c2[1]} ${p2[0]} ${p2[1]}`;
  }
  return d;
};

const Desktop = styled.div`
  display: flex;
  gap: 2px;
  width: 3836px;
  height: 2110px;
  overflow: hidden;
  background: #10294a;
  font-family: Inter, "Liberation Sans", sans-serif;
`;

const Window = styled.div`
  display: flex;
  flex-direction: column;
  flex: none;
  width: ${(p) => (p.$active ? 1919 : 1918)}px;
  height: 2110px;
  margin-left: ${(p) => (p.$active ? 0 : -3)}px;
  border-radius: 24px 24px 0 0;
  overflow: hidden;
  background: #282828;
  color: ${(p) => (p.$active ? "#b2b2b4" : "#5d5d5f")};
`;

const TitleBar = styled.header`
  display: flex;
  align-items: center;
  flex: none;
  box-sizing: border-box;
  height: 106px;
  padding: 0 24px 2px 38px;
  background: ${(p) => (p.$active ? "#3a3a3c" : "#2c2c2e")};
  border-top: 2px solid ${(p) => (p.$active ? "#77777a" : "#66666a")};
  border-bottom: 2px solid #111112;
`;

const Lights = styled.div`
  display: flex;
  gap: 15px;
  margin-right: 54px;
`;

const Light = styled.span`
  width: 25px;
  height: 25px;
  border-radius: 50%;
  background: ${(p) => p.$color};
`;

const TitleBlock = styled.div`
  display: flex;
  flex-direction: column;
  gap: 1px;
  margin-left: 27px;
`;

const Title = styled.div`
  font-size: 26.5px;
  font-weight: 700;
  line-height: 30px;
  color: ${(p) => (p.$active ? "#d0d0d2" : "#707072")};
`;

const Subtitle = styled.div`
  font-size: 20px;
  line-height: 24px;
  color: ${(p) => (p.$active ? "#8c8c8e" : "#545456")};
`;

const Tools = styled.div`
  display: flex;
  align-items: center;
  margin-left: auto;
`;

const Icon = styled.svg`
  flex: none;
  width: ${(p) => p.$w}px;
  height: 52px;
  margin-left: ${(p) => p.$gap || 0}px;
  fill: none;
  stroke: currentColor;
  stroke-width: 2.6;
  stroke-linecap: round;
  stroke-linejoin: round;
`;

const ToolDivider = styled.span`
  width: 1px;
  height: 40px;
  margin-left: 25px;
  background: ${(p) => (p.$active ? "#545456" : "#3c3c3e")};
`;

const SearchBox = styled.div`
  display: flex;
  align-items: center;
  box-sizing: border-box;
  width: 504px;
  height: 55px;
  margin-left: 31px;
  padding-left: 20px;
  gap: 17px;
  border: 2px solid ${(p) => (p.$active ? "#4b4b4d" : "#39393b")};
  border-radius: 14px;
  font-size: 26px;
  color: ${(p) => (p.$active ? "#737375" : "#4b4b4d")};
`;

const SearchIcon = styled.svg`
  flex: none;
  width: 36px;
  height: 26px;
  fill: none;
  stroke: ${(p) => (p.$active ? "#a0a0a2" : "#58585a")};
  stroke-width: 2.4;
  stroke-linecap: round;
  stroke-linejoin: round;
`;

const Content = styled.main`
  display: flex;
  flex: 1;
  min-height: 0;
  border-bottom: 2px solid #58585a;
`;

const Viewport = styled.div`
  flex: 1;
  min-width: 0;
  box-sizing: border-box;
  padding: ${(p) => p.$top}px 0 0 ${(p) => p.$left}px;
`;

const ScrollGutter = styled.div`
  flex: none;
  box-sizing: border-box;
  width: 32px;
  padding: 5px 8px 0 7px;
  background: #2c2c2c;
  border-left: 1px solid #3a3a3a;
`;

const ScrollThumb = styled.div`
  height: 1725px;
  border-radius: 8px;
  background: #6a6a6c;
`;

const Page = styled.div`
  position: relative;
  width: ${(p) => p.$w}px;
  height: ${(p) => p.$h}px;
  overflow: hidden;
  background: #fff;
`;

const EdgeLayer = styled.svg`
  position: absolute;
  inset: 0;
  width: 100%;
  height: 100%;
`;

const GraphNode = styled.div.attrs((p) => ({
  style: {
    left: p.$box[0] - p.$page.x,
    top: p.$box[1] - p.$page.y,
    width: p.$box[2] - p.$box[0],
    height: p.$box[3] - p.$box[1],
  },
}))`
  position: absolute;
  box-sizing: border-box;
  padding: 0 0 0 ${(p) => p.$page.pad - 1}px;
  background: #fff;
  border: ${(p) => (p.$page.font < 10 ? 1 : 1.5)}px solid #444;
  color: ${(p) => p.$page.ink};
  font-family: "Liberation Mono", monospace;
  font-size: ${(p) => p.$page.font}px;
  line-height: ${(p) => p.$page.line}px;
  text-rendering: geometricPrecision;
  white-space: pre;
`;

const Graph = ({ page, nodes, edges, prefix }) => (
  <Page $w={page.w} $h={page.h}>
    <EdgeLayer viewBox={`${page.x} ${page.y} ${page.w} ${page.h}`}>
      <defs>
        {Object.entries(COLORS).map(([key, color]) => (
          <marker
            key={key}
            id={`${prefix}-${key}`}
            markerUnits="userSpaceOnUse"
            markerWidth={page.head}
            markerHeight={page.head}
            viewBox="0 0 10 10"
            refX="10"
            refY="5"
            orient="auto"
          >
            <path d="M0 0L10 5L0 10Z" fill={color} />
          </marker>
        ))}
      </defs>
      {edges.map(([color, pts], i) => (
        <path
          key={i}
          d={edgePath(pts)}
          fill="none"
          stroke={COLORS[color]}
          strokeWidth="1"
          markerEnd={`url(#${prefix}-${color})`}
        />
      ))}
    </EdgeLayer>
    {nodes.map(([x0, y0, x1, y1, text]) => (
      <GraphNode key={`${x0}-${y0}`} $box={[x0, y0, x1, y1]} $page={page}>
        {text}
      </GraphNode>
    ))}
  </Page>
);

const SidebarIcon = () => (
  <Icon $w={38} viewBox="0 0 38 52">
    <rect x="1.5" y="11" width="35" height="28" rx="4" />
    <path d="M14 11V39M5.5 18H10M5.5 23H10M5.5 28H10" />
  </Icon>
);

const Chevron = ({ gap }) => (
  <Icon $w={14} $gap={gap} viewBox="0 0 14 52">
    <path d="M1.5 24L7 31L12.5 24" />
  </Icon>
);

const InfoIcon = () => (
  <Icon $w={33} viewBox="0 0 33 52">
    <circle cx="16.5" cy="25" r="15.2" />
    <path d="M13 23.5H16.5V33.5M12.5 33.5H20.5" />
    <circle cx="16.5" cy="17.5" r="1.2" />
  </Icon>
);

const ZoomIcon = ({ gap, plus }) => (
  <Icon $w={33} $gap={gap} viewBox="0 0 33 52">
    <circle cx="14" cy="23.5" r="12.5" />
    <path d="M23 33L31.5 41.5M9 23.5H19" />
    {plus && <path d="M14 18.5V28.5" />}
  </Icon>
);

const ShareIcon = () => (
  <Icon $w={29} $gap={48} viewBox="0 0 29 52">
    <path d="M9 17H5.5A4 4 0 0 0 1.5 21V38A4 4 0 0 0 5.5 42H23.5A4 4 0 0 0 27.5 38V21A4 4 0 0 0 23.5 17H20" />
    <path d="M14.5 29V5.5M9 11L14.5 5.5L20 11" />
  </Icon>
);

const PenIcon = () => (
  <Icon $w={33} $gap={74} viewBox="0 0 33 52">
    <path d="M8 25L23 6.5L30 12L14.5 31L5 34Z" />
    <path d="M20.5 9.5L27.5 15M8 25L14.5 31" />
    <path d="M1.5 39.5H32" strokeWidth="3.2" />
  </Icon>
);

const RotateIcon = () => (
  <Icon $w={34} $gap={52} viewBox="0 0 34 52">
    <rect x="1.5" y="14" width="22" height="26" rx="4" />
    <path d="M32.5 19C32.5 12 28 8.5 21 8.5M26 3.5L21 8.5L26 13.5" />
  </Icon>
);

const MarkupIcon = () => (
  <Icon $w={34} $gap={35} viewBox="0 0 34 52">
    <circle cx="17" cy="25" r="15.2" />
    <path d="M11.5 39L15 18L17 11L19 18L22.5 39M15 18H19" />
  </Icon>
);

const PreviewWindow = ({ active, name, page, nodes, edges, prefix, left, top }) => (
  <Window $active={active}>
    <TitleBar $active={active}>
      <Lights>
        <Light $color={active ? "#ff5f57" : "#58585a"} />
        <Light $color={active ? "#febc2e" : "#58585a"} />
        <Light $color={active ? "#28c840" : "#58585a"} />
      </Lights>
      <SidebarIcon />
      <Chevron gap={12} />
      <TitleBlock>
        <Title $active={active}>{name}</Title>
        <Subtitle $active={active}>1 page</Subtitle>
      </TitleBlock>
      <Tools>
        <InfoIcon />
        <ZoomIcon gap={48} />
        <ZoomIcon gap={36} plus />
        <ShareIcon />
        <PenIcon />
        <ToolDivider $active={active} />
        <Chevron gap={21} />
        <RotateIcon />
        <MarkupIcon />
        <SearchBox $active={active}>
          <SearchIcon $active={active} viewBox="0 0 36 26">
            <circle cx="11" cy="11" r="9.2" />
            <path d="M17.5 18L25 25M28 8L31.5 12L35 8" />
          </SearchIcon>
          Search
        </SearchBox>
      </Tools>
    </TitleBar>
    <Content>
      <Viewport $left={left} $top={top}>
        <Graph page={page} nodes={nodes} edges={edges} prefix={prefix} />
      </Viewport>
      {!active && (
        <ScrollGutter>
          <ScrollThumb />
        </ScrollGutter>
      )}
    </Content>
  </Window>
);

export default function App() {
  return (
    <Desktop>
      <GlobalStyle />
      <PreviewWindow
        name="3rd_graph.cfg.gv.pdf"
        page={LEFT_PAGE}
        nodes={LEFT_NODES}
        edges={LEFT_EDGES}
        prefix="left"
        left={424}
        top={0}
      />
      <PreviewWindow
        active
        name="no_3rd_graph.cfg.gv.pdf"
        page={RIGHT_PAGE}
        nodes={RIGHT_NODES}
        edges={RIGHT_EDGES}
        prefix="right"
        left={393}
        top={73}
      />
    </Desktop>
  );
}
